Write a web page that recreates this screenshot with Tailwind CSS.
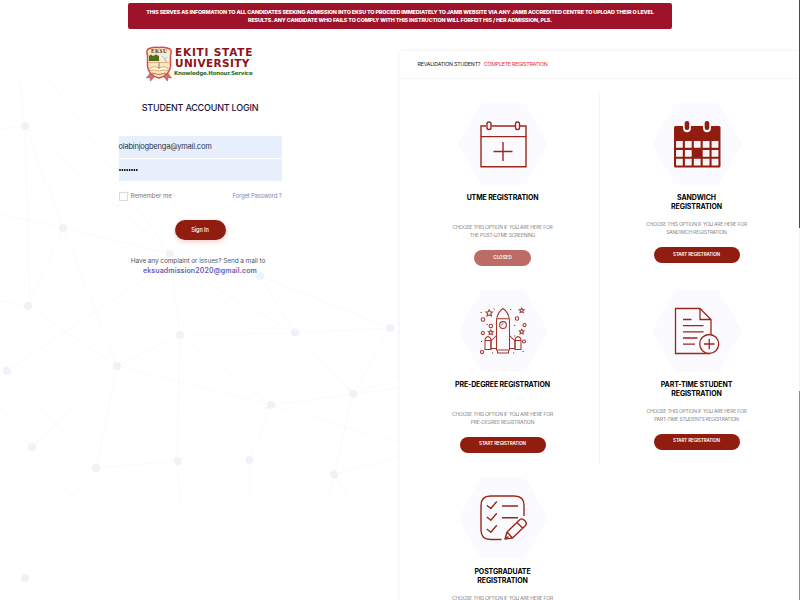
<!DOCTYPE html>
<html lang="en">
<head>
<meta charset="utf-8">
<title>Student Account Login</title>
<script src="https://cdn.jsdelivr.net/npm/@tailwindcss/browser@4"></script>
</head>
<body class="relative h-[600px] w-[800px] overflow-hidden bg-white font-['Inter','Liberation_Sans',sans-serif] text-black whitespace-nowrap">

<!-- Decorative network background -->
<svg class="absolute left-0 top-0 -z-10" width="400" height="600" viewBox="0 0 400 600">
  <g stroke="#fafafb" stroke-width="1" fill="none">
    <path d="M20 80L25 126L30 306M50 80L170 254M0 129L25 126L170 254M25 126L63 228L117 366M0 214L63 228L170 254L180 335M63 228L28 306L0 301M28 306L117 366L180 335L260 276L390 328M7 371L170 262L295 333L180 335L271 405L117 366L96 468M7 371L0 355M7 371L96 468M117 366L32 447L0 407M0 462L32 447L72 497L96 468L177 461L180 335M177 461L271 405L250 460L250 500M271 405L353 394L295 333L390 328L353 394L334 474L400 457M271 405L400 443M353 394L400 376M353 394L400 388M260 276L295 333M177 461L180 500M334 474L350 500M334 474L328 500"/>
  </g>
  <g fill="#f0f2fa">
    <circle cx="25" cy="126" r="4"/><circle cx="63" cy="228" r="4"/><circle cx="170" cy="254" r="4"/><circle cx="28" cy="306" r="4"/><circle cx="260" cy="276" r="4"/><circle cx="180" cy="335" r="4"/><circle cx="295" cy="332.500" r="4"/><circle cx="390" cy="328" r="4"/><circle cx="7" cy="371" r="4"/><circle cx="117" cy="366" r="4"/><circle cx="353" cy="394" r="4"/><circle cx="271" cy="405" r="4"/><circle cx="32" cy="447" r="4"/><circle cx="96" cy="468" r="4"/><circle cx="177.500" cy="461" r="4"/><circle cx="249.500" cy="460" r="4"/><circle cx="334" cy="474.500" r="4"/><circle cx="25" cy="578" r="4"/>
  </g>
</svg>

<div class="flex h-full flex-col overflow-hidden pt-[3px]">
  <header class="mx-auto flex h-[26px] w-[544px] shrink-0 flex-col items-center justify-center rounded-[2px] bg-[#9e132a] text-[5.4px] leading-[8px] font-extrabold tracking-[-0.13px] text-white">
    <p>THIS SERVES AS INFORMATION TO ALL CANDIDATES SEEKING ADMISSION INTO EKSU TO PROCEED IMMEDIATELY TO JAMB WEBSITE VIA ANY JAMB ACCREDITED CENTRE TO UPLOAD THEIR O LEVEL</p>
    <p>RESULTS. ANY CANDIDATE WHO FAILS TO COMPLY WITH THIS INSTRUCTION WILL FORFEIT HIS / HER ADMISSION, PLS.</p>
  </header>

  <div class="flex min-h-0 flex-1">
    <!-- Login -->
    <section class="flex w-[400px] flex-col items-center pt-[17px]">
      <div class="flex h-[36px] w-[108px] gap-[2px]">
        <svg width="27" height="36" viewBox="0 0 27 36" class="shrink-0">
          <path d="M5 26L0.500 32L4 31.500L4.500 35L9 30M21 26L25.500 32L22 31.500L21.500 35L17 30" fill="#cf7474" stroke="#a04a48" stroke-width=".6"/>
          <path d="M2 3Q7 .5 13 1.500Q19 .5 24 3Q26 5 24.500 9V20Q24 29 13 32Q2 29 1.500 20V9Q0 5 2 3Z" fill="#fae9bd" stroke="#d84b48" stroke-width="1.500"/>
          <path d="M3 15V10L5 8.500L7 10L10 8.500L13 10V15Z" fill="#526b20"/>
          <path d="M14 8.500H23V16H14Z" fill="#eef0e4"/>
          <path d="M16 10L19 13L21 11M18 14L21 15" stroke="#a9ac9b" stroke-width=".8" fill="none"/>
          <path d="M4 22Q8 19 13 22Q18 19 22 22V25Q18 23 13 25Q8 23 4 25Z" fill="#fff8dc" stroke="#b6855b" stroke-width=".6"/>
          <path d="M13 17V23M6 27Q13 30 20 27" stroke="#b3614b" stroke-width=".9" fill="none"/>
          <path d="M3 16.500H23" stroke="#d99b6b" stroke-width=".8"/>
          <text x="13" y="6.800" text-anchor="middle" font-family="Liberation Serif" font-weight="700" font-size="5.500" fill="#5c2a22" textLength="16">EKSU</text>
        </svg>
        <div class="flex flex-col pt-px font-['DejaVu_Sans',sans-serif] font-bold text-[#8e1119]">
          <span class="text-[10.5px] leading-[11px] tracking-[0.8px]">EKITI STATE</span>
          <span class="text-[10.5px] leading-[11px] tracking-[0.4px]">UNIVERSITY</span>
          <span class="-ml-px pt-px text-[5.5px] leading-[7px] tracking-[-0.2px] text-[#2e6b1c]">Knowledge.Honour.Service</span>
        </div>
      </div>

      <h1 class="mt-[20px] text-[9px] leading-[12px] font-medium tracking-[-0.21px] text-[#1b1440]">STUDENT ACCOUNT LOGIN</h1>

      <form class="mt-[22px] flex w-[163px] flex-col items-center">
        <div class="flex h-[22px] w-full items-center bg-[#e8effc] text-[7.5px] tracking-[-0.2px] text-[#2b3044]">olabinjogbenga@ymail.com</div>
        <div class="mt-px flex h-[22px] w-full items-center bg-[#e8effc]">
          <svg width="19" height="2" viewBox="0 0 19 2"><path d="M1 1H19" stroke="#000" stroke-width="1.800" stroke-linecap="round" stroke-dasharray="0 2.400"/></svg>
        </div>
        <div class="mt-[11px] flex h-[9px] w-full text-[6px] leading-[8px]">
          <span class="size-[9px] border border-[#dcdcdc] bg-white"></span>
          <span class="ml-[3px] text-[#777]">Remember me</span>
          <span class="ml-auto tracking-[-0.2px] text-[#8d86b8]">Forget Password ?</span>
        </div>
        <div class="mt-[19px] flex h-[20px] w-[51px] items-center justify-center rounded-full bg-[#901d10] text-[5.6px] font-medium tracking-[-0.08px] text-white shadow-[0_2px_5px_rgba(200,30,40,0.22)]">Sign In</div>
      </form>
      <p class="mt-[17px] mr-[4px] text-[6.5px] leading-[9px] tracking-[-0.09px] text-[#555]">Have any complaint or issues? Send a mail to</p>
      <p class="text-[7px] leading-[9px] font-semibold tracking-[0.11px] text-[#6a5cb8]">eksuadmission2020@gmail.com</p>
    </section>

    <!-- Registration options -->
    <section class="mt-[22px] w-[400px] bg-white shadow-[0_0_4px_rgba(0,0,0,0.07)]">
      <div class="flex h-[28px] items-center gap-[3.500px] border-b border-[#f5f5f5] pl-[17.500px] text-[5.3px]">
        <span class="tracking-[-0.2px] text-[#222]">REVALIDATION STUDENT?</span>
        <span class="tracking-[-0.24px] text-[#ee2b35]">COMPLETE REGISTRATION</span>
      </div>

      <div class="relative grid grid-cols-[194px_194px] auto-rows-[187px] pl-[5.500px] pt-[13px] text-center">
        <div class="absolute left-[199px] top-[14px] h-[371px] w-px bg-[#f4f4f5]"></div>

        <article class="flex flex-col items-center pt-[11px]">
          <svg width="92" height="82" viewBox="0 0 92 82">
            <path d="M24 0H68L91 41L68 82H24L1 41Z" fill="#fbfbff"/>
            <g transform="translate(-456.500 -103)" fill="none" stroke="#9b271b" stroke-width="1.400">
              <path d="M485.500 126H480.500V166.700H525.500V126H519.500M491 126H514.500M480.500 136.600H525.500"/>
              <rect x="486.500" y="122" width="4" height="7.500" rx="1.800"/><rect x="515" y="122" width="4" height="7.500" rx="1.800"/>
              <path d="M502.500 142V161M493 151.500H512"/>
            </g>
          </svg>
          <h2 class="mt-[9px] h-[27px] text-[7px] leading-[8.500px] font-bold tracking-[-0.14px]">UTME REGISTRATION</h2>
          <p class="mt-[2px] text-[5px] leading-[8px] font-light tracking-[-0.22px] text-[#555]">CHOOSE THIS OPTION IF YOU ARE HERE FOR<br>THE POST-UTME SCREENING</p>
          <div class="mt-[11px] flex h-[16px] w-[57px] items-center justify-center rounded-full bg-[#bc6c65] text-[4.6px] font-semibold text-white">CLOSED</div>
        </article>

        <article class="flex flex-col items-center pt-[11px]">
          <svg width="92" height="82" viewBox="0 0 92 82">
            <path d="M24 0H68L91 41L68 82H24L1 41Z" fill="#fbfbff"/>
            <g transform="translate(-650.500 -103)">
              <path d="M675 126H718.500Q720 126 720 127.500V166Q720 167.500 718.500 167.500H675Q673.500 167.500 673.500 166V127.500Q673.500 126 675 126Z" fill="#901d10"/>
              <path d="M682.500 124V127.500Q682.500 132.200 686.500 132.200T690.500 127.500V124ZM702.500 124V127.500Q702.500 132.200 706.500 132.200T710.500 127.500V124Z" fill="#fbfbff"/>
              <rect x="684.200" y="121" width="4.600" height="9" rx="2.200" fill="#901d10"/><rect x="704.200" y="121" width="4.600" height="9" rx="2.200" fill="#901d10"/>
              <path d="M675.500 141h6.800v6.800h-6.800zM684.400 141h6.800v6.800h-6.800zM693.300 141h6.800v6.800h-6.800zM702.200 141h6.800v6.800h-6.800zM711.100 141h6.800v6.800h-6.800zM675.500 149.900h6.800v6.800h-6.800zM684.400 149.900h6.800v6.800h-6.800zM702.200 149.900h6.800v6.800h-6.800zM711.100 149.900h6.800v6.800h-6.800zM675.500 158.800h6.800v6.800h-6.800zM684.400 158.800h6.800v6.800h-6.800zM693.300 158.800h6.800v6.800h-6.800zM702.200 158.800h6.800v6.800h-6.800zM711.100 158.800h6.800v6.800h-6.800z" fill="#fbf3f7"/>
            </g>
          </svg>
          <h2 class="mt-[9px] h-[17px] text-[7px] leading-[8.500px] font-bold tracking-[-0.08px]">SANDWICH<br>REGISTRATION</h2>
          <p class="mt-[9px] text-[5px] leading-[8px] font-light tracking-[-0.2px] text-[#555]">CHOOSE THIS OPTION IF YOU ARE HERE FOR<br>SANDWICH REGISTRATION</p>
          <div class="mt-[11px] flex h-[16px] w-[86px] items-center justify-center rounded-full bg-[#901d10] text-[4.6px] font-semibold tracking-[-0.17px] text-white">START REGISTRATION</div>
        </article>

        <article class="flex flex-col items-center pt-[11px]">
          <svg width="92" height="82" viewBox="0 0 92 82">
            <path d="M24 0H68L91 41L68 82H24L1 41Z" fill="#fbfbff"/>
            <g transform="translate(-456.500 -290)" fill="none" stroke="#a2342a" stroke-width="1.050">
              <path d="M496 350V320Q497 312 502.500 308.500Q508 312 509 320V350ZM496 318.800H509"/>
              <path d="M497 350.500V353H508V350.500"/>
              <circle cx="502.500" cy="325" r="3.400"/><path d="M501 325.500Q501 323.800 502.800 323.500" stroke-width=".8"/>
              <path d="M496 335.500L490.500 341V348.500H496M509 335.500L514.500 341V348.500H509"/>
              <path d="M484.500 349.500V340Q485 337 487.500 336.500Q490 337 490.500 340V349.500ZM484.500 340.500H490.500M514.500 349.500V340Q515 337 517.500 336.500Q520 337 520.500 340V349.500ZM514.500 340.500H520.500"/>
              <circle cx="482.500" cy="319.500" r="1.800"/><circle cx="490.300" cy="326" r="1.700"/><circle cx="482.300" cy="333" r="1.600"/><circle cx="481.500" cy="352" r="1.600"/><circle cx="516.500" cy="318.500" r="1.700"/><circle cx="524" cy="325" r="1.600"/><circle cx="523.500" cy="341.500" r="1.500"/>
              <path d="M488.700 309.800l1 2 2.300.2-1.700 1.600.5 2.300-2.100-1.100-2.100 1.100.5-2.300-1.700-1.600 2.300-.2z"/>
              <path d="M521.200 308l.8 1.500 1.700.2-1.300 1.200.4 1.700-1.600-.8-1.600.8.400-1.700-1.300-1.200 1.700-.2zM490.300 330l.8 1.500 1.700.2-1.300 1.200.4 1.700-1.600-.8-1.600.8.400-1.700-1.300-1.200 1.700-.2zM521.200 329.300l.8 1.500 1.700.2-1.300 1.200.4 1.700-1.600-.8-1.600.8.400-1.700-1.300-1.200 1.700-.2z"/>
              <path d="M480 312.500h1.200M493 309h1.200M509.500 309.500h1.200M486 324.500h1.200M513.500 336h1.200M513.500 325.500h1.200M480.500 341.500h1.200M491.500 353h1.200M512.500 353h1.200M522 351.500h1.200"/>
            </g>
          </svg>
          <h2 class="mt-[9px] h-[27px] text-[7px] leading-[8.500px] font-bold tracking-[-0.13px]">PRE-DEGREE REGISTRATION</h2>
          <p class="mt-[2px] text-[5px] leading-[8px] font-light tracking-[-0.2px] text-[#555]">CHOOSE THIS OPTION IF YOU ARE HERE FOR<br>PRE-DEGREE REGISTRATION</p>
          <div class="mt-[10.500px] flex h-[16px] w-[86px] items-center justify-center rounded-full bg-[#901d10] text-[4.6px] font-semibold tracking-[-0.17px] text-white">START REGISTRATION</div>
        </article>

        <article class="flex flex-col items-center pt-[11px]">
          <svg width="92" height="82" viewBox="0 0 92 82">
            <path d="M24 0H68L91 41L68 82H24L1 41Z" fill="#fbfbff"/>
            <g transform="translate(-650.500 -290)" fill="none" stroke="#9b271b" stroke-width="1.300">
              <path d="M709 353.500H675V308.500H699.500L710.500 319.500V335M699.500 308.500V319.500H710.500"/>
              <path d="M682.500 319.500H691M682.500 325.700H703M682.500 331.900H703M682.500 338H697M682.500 344.200H694.500"/>
              <circle cx="708.700" cy="344" r="9.500" fill="#fbfbff"/><path d="M703.500 344H714M708.700 338.800V349.200"/>
            </g>
          </svg>
          <h2 class="mt-[9px] h-[17px] text-[7px] leading-[8.500px] font-bold tracking-[-0.13px]">PART-TIME STUDENT<br>REGISTRATION</h2>
          <p class="mt-[9px] text-[5px] leading-[8px] font-light tracking-[-0.22px] text-[#555]">CHOOSE THIS OPTION IF YOU ARE HERE FOR<br>PART-TIME STUDENTS REGISTRATION</p>
          <div class="mt-[10.500px] flex h-[16px] w-[86px] items-center justify-center rounded-full bg-[#901d10] text-[4.6px] font-semibold tracking-[-0.17px] text-white">START REGISTRATION</div>
        </article>

        <article class="flex flex-col items-center pt-[11px]">
          <svg width="92" height="82" viewBox="0 0 92 82">
            <path d="M24 0H68L91 41L68 82H24L1 41Z" fill="#fbfbff"/>
            <g transform="translate(-456.500 -477)" fill="none" stroke="#9b271b" stroke-width="1.400" stroke-linejoin="round">
              <path d="M501 539.500H490Q480.500 539.500 480.500 530V505.500Q480.500 496 490 496H514Q523.500 496 523.500 505.500V516"/>
              <path d="M486.300 505.200L490.300 508.500L496.300 501.500M486.300 517L490.300 520.300L496.300 513.300M486.300 529L490.300 532.300L496.300 525.300M501.500 506H517.500M501.500 517.800H517.500"/>
              <path d="M504.500 539L506.500 532L519.500 519.500Q521.500 518 523.500 520L525 521.500Q526.500 523.500 525 525.500L512 538ZM506.500 532L512 538M516.500 522.500L522 528M504.500 539L508 536.500"/>
            </g>
          </svg>
          <h2 class="mt-[9px] h-[17px] text-[7px] leading-[8.500px] font-bold tracking-[-0.13px]">POSTGRADUATE<br>REGISTRATION</h2>
          <p class="mt-[9px] text-[5px] leading-[8px] font-light tracking-[-0.2px] text-[#555]">CHOOSE THIS OPTION IF YOU ARE HERE FOR</p>
        </article>
      </div>
    </section>
  </div>
</div>

<!-- Scroll track at the window edge -->
<div class="absolute right-0 top-0 flex h-full w-px flex-col">
  <div class="h-[228px] bg-[#4a4a4e]"></div>
  <div class="h-[163px] bg-[#f4f4f4]"></div>
  <div class="h-[209px] bg-[#8a8a8e]"></div>
</div>
</body>
</html>
